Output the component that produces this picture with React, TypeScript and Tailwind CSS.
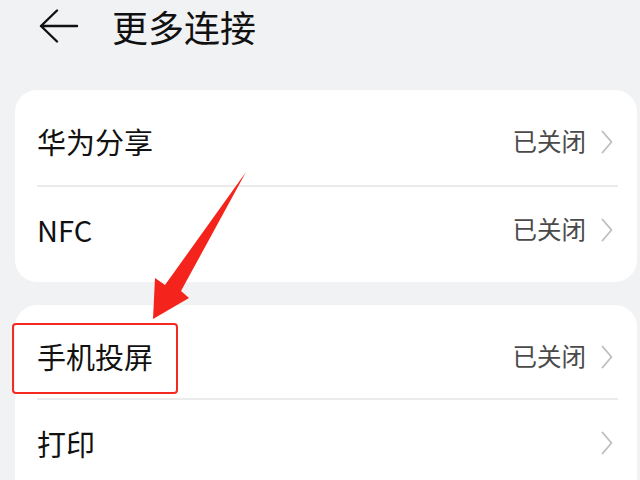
import React from 'react';

const font = { fontFamily: '"Noto Sans CJK SC", "Noto Sans", sans-serif' };

function Chevron() {
  return (
    <svg width="12" height="24" viewBox="0 0 12 24" className="ml-[15px]">
      <path d="M1.5 1.5 L10.5 12 L1.5 22.5" fill="none" stroke="#bdbdbd" strokeWidth="1.8" strokeLinecap="round" strokeLinejoin="round" />
    </svg>
  );
}

interface RowProps {
  label: string;
  value?: string;
  divider?: boolean;
  h: string;
}

function Row({ label, value, divider, h }: RowProps) {
  return (
    <div className={`flex items-center pl-[22px] pr-[24px] ${h} relative`}>
      <span className="text-[29px] text-[#111] leading-none">{label}</span>
      <div className="flex-1" />
      {value && <span className="text-[24.5px] text-[#4a4a4a] leading-none">{value}</span>}
      <Chevron />
      {divider && <div className="absolute left-[22px] right-[19px] bottom-0 h-[2px] bg-[#ebebeb]" />}
    </div>
  );
}

export default function App() {
  return (
    <div className="w-[640px] h-[480px] bg-[#f1f2f4] overflow-hidden relative" style={font}>
      {/* header */}
      <div className="flex items-center h-[50px] pt-[1px]">
        <svg width="40" height="34" viewBox="0 0 40 34" className="ml-[39px]">
          <path d="M18 1.5 L2 17 L18 32.5 M2 17 L38 17" fill="none" stroke="#111" strokeWidth="2.4" strokeLinecap="round" strokeLinejoin="round" />
        </svg>
        <span className="ml-[33px] text-[36px] text-[#111] leading-none">更多连接</span>
      </div>

      <div className="ml-[15px] mr-[3px] mt-[40px] bg-white rounded-[22px]">
        <Row label="华为分享" value="已关闭" divider h="h-[97px] pt-[6px]" />
        <Row label="NFC" value="已关闭" h="h-[95px] pb-[10px]" />
      </div>

      <div className="ml-[15px] mr-[3px] mt-[23px] bg-white rounded-[22px] h-[200px]">
        <Row label="手机投屏" value="已关闭" divider h="h-[95px] pt-[8px]" />
        <Row label="打印" h="h-[86px]" />
      </div>

      {/* annotation box */}
      <div className="absolute left-[12px] top-[323px] w-[166px] h-[71px] border-[2.5px] border-[#f42a20] rounded-[4px]" />

      {/* annotation arrow */}
      <svg className="absolute left-0 top-0" width="640" height="480" viewBox="0 0 640 480">
        <polygon points="246,172 181,291 189,298 153,319 155,278 165,285" fill="#f4231b" />
      </svg>
    </div>
  );
}
